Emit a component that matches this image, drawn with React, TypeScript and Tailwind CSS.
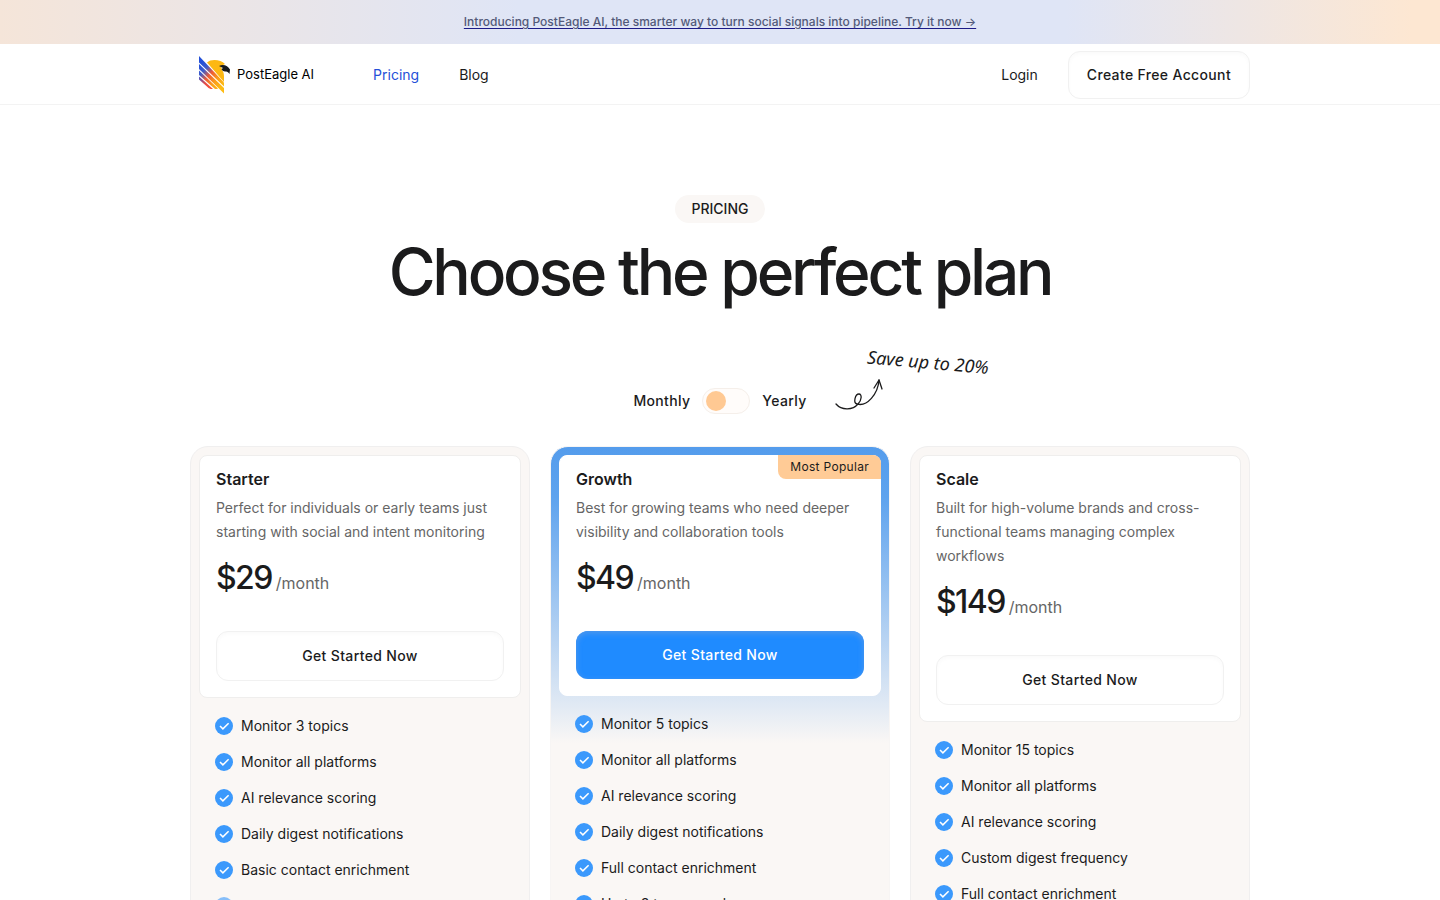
import { useState } from "react";

type Plan = {
  name: string;
  description: string;
  monthly: number;
  yearly: number;
  popular?: boolean;
  features: { label: string; muted?: boolean }[];
};

const plans: Plan[] = [
  {
    name: "Starter",
    description: "Perfect for individuals or early teams just starting with social and intent monitoring",
    monthly: 29,
    yearly: 23,
    features: [
      { label: "Monitor 3 topics" },
      { label: "Monitor all platforms" },
      { label: "AI relevance scoring" },
      { label: "Daily digest notifications" },
      { label: "Basic contact enrichment" },
      { label: "Invite team members", muted: true },
    ],
  },
  {
    name: "Growth",
    description: "Best for growing teams who need deeper visibility and collaboration tools",
    monthly: 49,
    yearly: 39,
    popular: true,
    features: [
      { label: "Monitor 5 topics" },
      { label: "Monitor all platforms" },
      { label: "AI relevance scoring" },
      { label: "Daily digest notifications" },
      { label: "Full contact enrichment" },
      { label: "Up to 3 team members" },
    ],
  },
  {
    name: "Scale",
    description: "Built for high-volume brands and cross-functional teams managing complex workflows",
    monthly: 149,
    yearly: 119,
    features: [
      { label: "Monitor 15 topics" },
      { label: "Monitor all platforms" },
      { label: "AI relevance scoring" },
      { label: "Custom digest frequency" },
      { label: "Full contact enrichment" },
    ],
  },
];

function Logo() {
  return (
    <svg viewBox="0 0 32 40" className="h-10 w-8" aria-hidden="true">
      <defs>
        <linearGradient id="wing" gradientUnits="userSpaceOnUse" x1="2" y1="10" x2="25" y2="30">
          <stop offset="0" stopColor="#2450d8" />
          <stop offset="0.22" stopColor="#3f5cc9" />
          <stop offset="0.45" stopColor="#ee5a35" />
          <stop offset="0.7" stopColor="#fb9a1a" />
          <stop offset="1" stopColor="#fdbb12" />
        </linearGradient>
        <linearGradient id="wingLow" gradientUnits="userSpaceOnUse" x1="1" y1="20" x2="14" y2="30">
          <stop offset="0" stopColor="#2f55d4" />
          <stop offset="0.6" stopColor="#e64a45" />
          <stop offset="1" stopColor="#f4513c" />
        </linearGradient>
      </defs>
      <path d="M9 7.500c4-4 14-3 18 1.500l-4 2 1 4c2 2 2 5 2 8v4z" fill="#fdb813" />
      <path d="M21 11c4-2.500 9-.500 11 3.500l-.500 4.500c-1-2-2.500-2.800-4-2.500-2 .2-3.500-1-4-2.500l1.500-1z" fill="#17191c" />
      <path d="M1 1l25 26.500v4L1 7.500z" fill="url(#wing)" />
      <path d="M1 9l25 24v5.500L1 14z" fill="url(#wing)" />
      <path d="M1 15.500l19 18c-1 .6-2 .7-3 .5L1 20z" fill="url(#wing)" />
      <path d="M1 21.500l14 12.500c-2 .4-4-.4-5.500-2L1 24.500z" fill="url(#wingLow)" />
    </svg>
  );
}

function CheckIcon() {
  return (
    <svg viewBox="0 0 18 18" className="size-[18px] shrink-0" aria-hidden="true">
      <circle cx="9" cy="9" r="9" fill="#3b99fc" />
      <path d="M5 9l2.900 2.900 5.700-5.600" fill="none" stroke="#fff" strokeWidth="1.500" />
    </svg>
  );
}

function PlanCard({ plan, yearly }: { plan: Plan; yearly: boolean }) {
  return (
    <article
      className={
        plan.popular
          ? "rounded-[18px] border border-[#f7f5f4] bg-[#faf7f5] bg-[linear-gradient(to_bottom,#549cec_0px,#5ea3ee_50px,#e2eaf4_260px,#faf7f5_296px)] p-2"
          : "rounded-[18px] border border-[#f0efef] bg-[#faf7f5] p-2"
      }
    >
      <div
        className={
          plan.popular
            ? "relative rounded-lg border border-white bg-white px-4 pt-[11px] pb-4"
            : "rounded-lg border border-[#efeeed] bg-white px-4 pt-[11px] pb-4"
        }
      >
        {plan.popular && (
          <span className="absolute -top-px -right-px rounded-tr-lg rounded-bl-lg bg-[#ffcb96] px-3 text-xs leading-6 tracking-wide">
            Most Popular
          </span>
        )}
        <h2 className="text-base leading-6 font-semibold">{plan.name}</h2>
        <p className="mt-[5px] text-sm leading-6 text-[#666]">{plan.description}</p>
        <p className="mt-2.5 flex items-baseline gap-1">
          <span className="text-[32px] leading-12 font-medium tracking-tighter">
            ${yearly ? plan.yearly : plan.monthly}
          </span>
          <span className="text-base text-[#666]">/month</span>
        </p>
        <button
          type="button"
          className={
            plan.popular
              ? "mt-[29px] h-12 w-full rounded-xl bg-[#1f8bff] text-sm font-medium tracking-wide text-white shadow-[inset_0_2px_5px_1px_#4a96ee]"
              : "mt-[29px] h-[50px] w-full rounded-xl border border-[#f1f1f1] bg-white text-sm font-medium tracking-wide shadow-[inset_0_2px_4px_#fafafa]"
          }
        >
          Get Started Now
        </button>
      </div>
      <ul className="flex flex-col gap-3 px-4 py-4">
        {plan.features.map((f) => (
          <li
            key={f.label}
            className={
              f.muted
                ? "flex items-center gap-2 text-sm leading-6 opacity-60"
                : "flex items-center gap-2 text-sm leading-6"
            }
          >
            <CheckIcon />
            {f.label}
          </li>
        ))}
      </ul>
    </article>
  );
}

export default function App() {
  const [yearly, setYearly] = useState(false);
  return (
    <div className="min-h-screen bg-white font-['Inter',sans-serif] text-[#1b1b1c] [scrollbar-width:none]">
      <div className="flex h-11 items-center justify-center bg-[linear-gradient(to_right,#f5e5d9_0%,#dfe5f6_36%,#dfe5f6_74%,#fde7d2_98%)]">
        <a href="#ai" className="text-xs font-medium text-[#535a79] underline decoration-[#1c1b87] underline-offset-2">
          Introducing PostEagle AI, the smarter way to turn social signals into pipeline. Try it now →
        </a>
      </div>
      <header className="border-b border-[#f3f3f3]">
        <div className="mx-auto flex h-[60px] max-w-[1060px] items-center justify-between pt-px pl-2">
          <div className="flex items-center">
            <a href="#home" className="flex items-center gap-[7px] text-[13px] text-black">
              <Logo />
              PostEagle AI
            </a>
            <nav className="ml-[59px] flex gap-10 text-sm">
              <a href="#pricing" className="text-[#2450d8]">Pricing</a>
              <a href="#blog">Blog</a>
            </nav>
          </div>
          <div className="flex items-center gap-[30px] text-sm">
            <a href="#login">Login</a>
            <a
              href="#signup"
              className="rounded-xl border border-[#f1f1f1] px-[18px] py-[13px] font-medium tracking-wide shadow-[inset_0_2px_4px_#fafafa]"
            >
              Create Free Account
            </a>
          </div>
        </div>
      </header>
      <main className="mx-auto max-w-[1060px]">
        <section className="flex flex-col items-center pt-[90px]">
          <p className="rounded-full bg-[#faf7f5] px-4 py-1 text-sm font-medium">PRICING</p>
          <h1 className="mt-[13px] text-center text-[64px] leading-[72px] font-medium tracking-tighter">
            Choose the perfect plan
          </h1>
          <div className="relative mt-20 flex items-center gap-3 text-sm leading-[26px] font-medium tracking-wide">
            <span>Monthly</span>
            <button
              type="button"
              role="switch"
              aria-checked={yearly}
              aria-label="Yearly billing"
              onClick={() => setYearly(!yearly)}
              className={
                yearly
                  ? "flex h-[26px] w-12 items-center justify-end rounded-full border border-[#f5efea] bg-[#fffcfa] px-[3px]"
                  : "flex h-[26px] w-12 items-center rounded-full border border-[#f5efea] bg-[#fffcfa] px-[3px]"
              }
            >
              <span className="size-5 rounded-full bg-[#ffc993]" />
            </button>
            <span>Yearly</span>
            <div className="absolute bottom-0 left-full ml-7 w-40">
              <p className="mb-1 ml-8 rotate-5 font-['Noto_Sans',cursive] text-lg leading-6 font-normal tracking-normal whitespace-nowrap italic">
                Save up to 20%
              </p>
              <svg viewBox="0 0 52 36" className="h-9 w-[52px]" fill="none" stroke="#1b1b1c" strokeWidth="1.300" strokeLinecap="round" strokeLinejoin="round" aria-hidden="true">
                <path d="M1 26c6 7 17 6 22 0 4-4 4-10 1-10-4 0-6 9-2 10 10 3 21-10 22-24" />
                <path d="M39 10l5-8 3 9" />
              </svg>
            </div>
          </div>
        </section>
        <section className="mt-8 grid grid-cols-3 gap-5">
          {plans.map((p) => (
            <PlanCard key={p.name} plan={p} yearly={yearly} />
          ))}
        </section>
      </main>
    </div>
  );
}
